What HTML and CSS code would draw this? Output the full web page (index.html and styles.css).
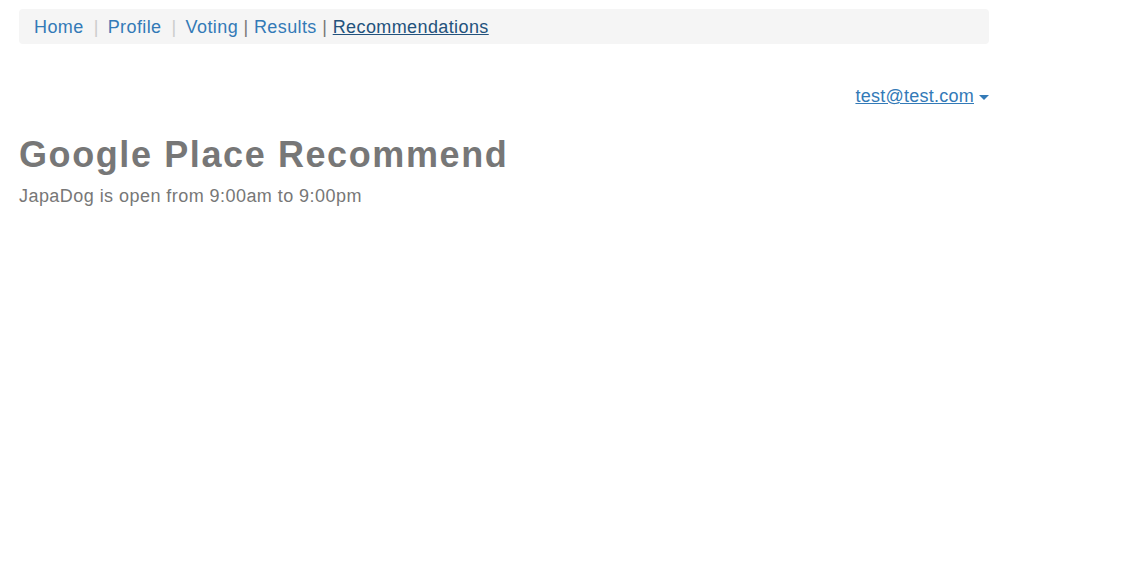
FILE: index.html
```html
<!DOCTYPE html>
<html>
<head>
<meta charset="utf-8">
<link rel="stylesheet" href="styles.css">
</head>
<body>
<div class="container">
  <ol class="crumbs">
    <li class="crumb"><a href="#">Home</a></li>
    <li class="crumb sep-light"><a href="#">Profile</a></li>
    <li class="crumb sep-light"><a href="#">Voting</a> <span class="sep">|</span> <a href="#">Results</a> <span class="sep">|</span> <a href="#" class="active">Recommendations</a></li>
  </ol>
  <div class="userbar">
    <a href="#" class="user">test@test.com <span class="caret"></span></a>
  </div>
  <h1 class="title">Google Place Recommend</h1>
  <p class="subtitle">JapaDog is open from 9:00am to 9:00pm</p>
</div>
</body>
</html>
```
FILE: styles.css
```css
html, body {
  margin: 0;
  padding: 0;
  background: #fff;
}
body {
  font-family: "Liberation Sans", Arial, Helvetica, sans-serif;
  font-size: 18px;
  color: #777;
  letter-spacing: 0.4px;
}
.container {
  width: 970px;
  padding: 9px 0 0 19px;
}
a {
  color: #337ab7;
  text-decoration: none;
}
.crumbs {
  list-style: none;
  margin: 0;
  padding: 9px 15px 7px;
  line-height: 19px;
  background: #f5f5f5;
  border-radius: 4px;
  display: flex;
}
.crumb {
  display: block;
}
.sep-light::before {
  content: "|";
  color: #ccc;
  padding: 0 9px 0 10px;
}
.sep {
  color: #777;
}
.active {
  color: #23527c;
  text-decoration: underline;
}
.userbar {
  display: flex;
  justify-content: flex-end;
  margin-top: 42px;
  line-height: 20px;
}
.user {
  text-decoration: underline;
  display: flex;
  align-items: center;
  gap: 5px;
  letter-spacing: 0.25px;
}
.caret {
  display: inline-block;
  width: 0;
  height: 0;
  border-top: 5px solid #337ab7;
  border-left: 5px solid transparent;
  border-right: 5px solid transparent;
  margin-top: 2px;
}
.title {
  font-size: 36px;
  font-weight: bold;
  letter-spacing: 1.6px;
  margin: 29px 0 0;
  line-height: 40px;
  color: #777;
}
.subtitle {
  margin: 10px 0 0;
  line-height: 22px;
  letter-spacing: 0.45px;
}
```
